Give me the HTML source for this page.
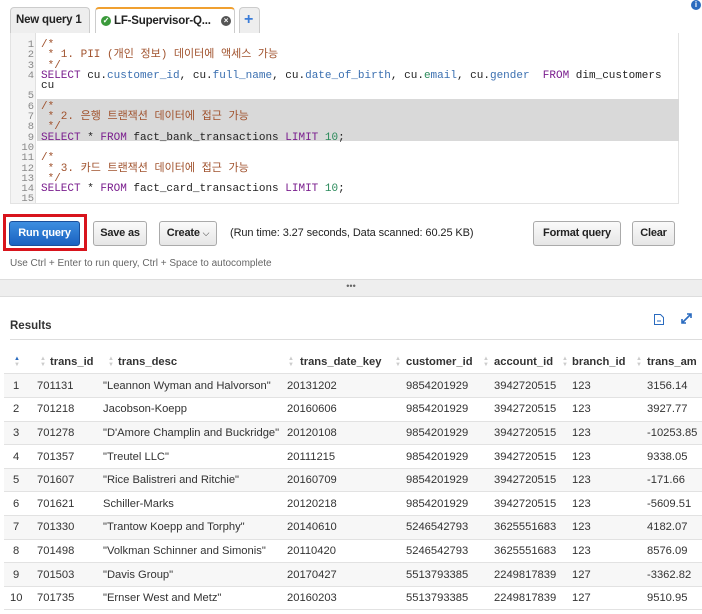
<!DOCTYPE html>
<html><head><meta charset="utf-8"><style>
*{margin:0;padding:0;box-sizing:border-box}
body{width:702px;height:614px;overflow:hidden;background:#fff;font-family:"Liberation Sans",Arial,sans-serif;color:#333;position:relative}
.a{position:absolute}
.tab{position:absolute;top:7px;height:26px;border:1px solid #ccc;border-bottom:none;border-radius:4px 4px 0 0;background:#eee;font-size:11.5px;font-weight:bold;line-height:24px;padding-left:5px;color:#222;letter-spacing:-0.2px}
.ed{position:absolute;left:10px;top:33px;width:669px;height:171px;border:1px solid #e3e3e3;border-top:none;background:#fff}
.gut{position:absolute;left:0;top:0;width:25px;height:100%;background:#f4f4f4;border-right:1px solid #e0e0e0}
.ln{position:absolute;left:0;width:23px;text-align:right;font-family:"Liberation Mono",monospace;font-size:10.5px;color:#888}
.code{position:absolute;left:30px;font-family:"Liberation Mono","Noto Sans CJK KR",monospace;font-size:11px;white-space:pre;color:#222;line-height:10.3px}
.c{color:#a0522d}.k{color:#7a1e8e}.p{color:#3a6fb0}.n{color:#2a8a5a}
.btn{position:absolute;top:221px;height:25px;border:1px solid #aaa;border-radius:3px;background:linear-gradient(#fafafa,#e6e6e6);font-size:11px;font-weight:bold;line-height:23px;text-align:center;color:#222;letter-spacing:-0.2px}
table{position:absolute;left:4px;top:374px;border-collapse:collapse;font-size:11.2px;width:710px;table-layout:fixed}
td{height:23.6px;border-bottom:1px solid #e2e2e2;white-space:nowrap;text-align:left;padding:0;overflow:hidden}
tr.o td{background:#f7f7f7}
.h{position:absolute;top:356px;font-size:11.2px;font-weight:bold;color:#333;white-space:nowrap}
.s{position:absolute;top:356px;color:#ccc;font-size:6px;line-height:6px}
</style></head><body>
<div class="tab" style="left:10px;width:80px">New query 1</div>
<div class="tab" style="left:95px;width:140px;background:#fff;border-top:2px solid #f0a030;height:27px"><span style="display:inline-block;width:10px;height:10px;border-radius:50%;background:#3b9a3b;color:#fff;font-size:8px;line-height:10px;text-align:center;vertical-align:middle">✓</span> LF-Supervisor-Q... <span style="position:absolute;left:125px;top:7px;width:10px;height:10px;border-radius:50%;background:#555;color:#fff;font-size:8px;line-height:10px;text-align:center">×</span></div>
<div class="tab" style="left:239px;width:21px;color:#3b7dd8;font-size:16px;padding-left:4px">+</div>
<div class="a" style="left:691px;top:0;width:10px;height:10px;border-radius:50%;background:#2a6bbf;color:#fff;font-size:8px;font-weight:bold;text-align:center;line-height:10px">i</div>
<div class="ed"><div class="gut"></div>
<div class="a" style="left:26px;top:66px;width:642px;height:42px;background:#d9d9d9"></div>
<div class="ln" style="top:7px;line-height:10.3px">1<br>2<br>3<br>4<br>&nbsp;<br>5<br>6<br>7<br>8<br>9<br>10<br>11<br>12<br>13<br>14<br>15</div>
<div class="code" style="top:7px"><span class="c">/*
 * 1. PII (개인 정보) 데이터에 액세스 가능
 */</span>
<span class="k">SELECT</span> cu.<span class="p">customer_id</span>, cu.<span class="p">full_name</span>, cu.<span class="p">date_of_birth</span>, cu.<span class="n">e</span><span class="p">mail</span>, cu.<span class="p">gender</span>  <span class="k">FROM</span> dim_customers
cu

<span class="c">/*
 * 2. 은행 트랜잭션 데이터에 접근 가능
 */</span>
<span class="k">SELECT</span> * <span class="k">FROM</span> fact_bank_transactions <span class="k">LIMIT</span> <span class="n">10</span>;

<span class="c">/*
 * 3. 카드 트랜잭션 데이터에 접근 가능
 */</span>
<span class="k">SELECT</span> * <span class="k">FROM</span> fact_card_transactions <span class="k">LIMIT</span> <span class="n">10</span>;
</div></div>
<div class="a" style="left:3px;top:214px;width:84px;height:37px;border:3px solid #d8141c"></div>
<div class="btn" style="left:9px;width:71px;background:linear-gradient(#3d8ee0,#1a62c0);border-color:#1a4f9a;color:#fff">Run query</div>
<div class="btn" style="left:93px;width:54px">Save as</div>
<div class="btn" style="left:159px;width:58px">Create <span style="font-weight:normal;font-size:9px">⌵</span></div>
<div class="a" style="left:230px;top:227px;font-size:11px;color:#222;letter-spacing:-0.1px">(Run time: 3.27 seconds, Data scanned: 60.25 KB)</div>
<div class="btn" style="left:533px;width:88px">Format query</div>
<div class="btn" style="left:632px;width:43px">Clear</div>
<div class="a" style="left:10px;top:258px;font-size:10px;color:#666">Use Ctrl + Enter to run query, Ctrl + Space to autocomplete</div>
<div class="a" style="left:0;top:279px;width:702px;height:18px;background:#eee;border-top:1px solid #ddd;border-bottom:1px solid #ddd;text-align:center;font-size:9px;line-height:12px;color:#666">•••</div>
<div class="a" style="left:10px;top:320px;font-size:11.5px;font-weight:bold;color:#333">Results</div>
<div class="a" style="left:10px;top:339px;width:692px;height:1px;background:#ddd"></div>
<svg class="a" style="left:653px;top:313px" width="12" height="13"><path d="M1.5 1.5h6l3 3v7h-9z" fill="none" stroke="#2a6bbf"/><path d="M4 8h4" stroke="#2a6bbf"/></svg>
<svg class="a" style="left:680px;top:312px" width="13" height="13"><path d="M2 11L11 2M7 2h4v4M2 7v4h4" fill="none" stroke="#2a6bbf" stroke-width="1.6"/></svg>
<div class="s" style="left:14px;color:#2a6bbf">▲<br><span style="color:#ccc">▼</span></div>
<div class="s" style="left:40px">▲<br>▼</div><div class="h" style="left:50px">trans_id</div>
<div class="s" style="left:108px">▲<br>▼</div><div class="h" style="left:118px">trans_desc</div>
<div class="s" style="left:288px">▲<br>▼</div><div class="h" style="left:300px">trans_date_key</div>
<div class="s" style="left:395px">▲<br>▼</div><div class="h" style="left:406px">customer_id</div>
<div class="s" style="left:483px">▲<br>▼</div><div class="h" style="left:494px">account_id</div>
<div class="s" style="left:562px">▲<br>▼</div><div class="h" style="left:572px">branch_id</div>
<div class="s" style="left:636px">▲<br>▼</div><div class="h" style="left:647px">trans_am</div>
<div class="a" style="left:4px;top:373px;width:698px;height:1px;background:#e2e2e2"></div>
<table>
<colgroup><col style="width:33px"><col style="width:66px"><col style="width:184px"><col style="width:119px"><col style="width:88px"><col style="width:78px"><col style="width:75px"><col></colgroup>
<tr class="o"><td style="padding-left:9px">1</td><td>701131</td><td>"Leannon Wyman and Halvorson"</td><td>20131202</td><td>9854201929</td><td>3942720515</td><td>123</td><td>3156.14</td></tr>
<tr><td style="padding-left:9px">2</td><td>701218</td><td>Jacobson-Koepp</td><td>20160606</td><td>9854201929</td><td>3942720515</td><td>123</td><td>3927.77</td></tr>
<tr class="o"><td style="padding-left:9px">3</td><td>701278</td><td>"D'Amore Champlin and Buckridge"</td><td>20120108</td><td>9854201929</td><td>3942720515</td><td>123</td><td>-10253.85</td></tr>
<tr><td style="padding-left:9px">4</td><td>701357</td><td>"Treutel LLC"</td><td>20111215</td><td>9854201929</td><td>3942720515</td><td>123</td><td>9338.05</td></tr>
<tr class="o"><td style="padding-left:9px">5</td><td>701607</td><td>"Rice Balistreri and Ritchie"</td><td>20160709</td><td>9854201929</td><td>3942720515</td><td>123</td><td>-171.66</td></tr>
<tr><td style="padding-left:9px">6</td><td>701621</td><td>Schiller-Marks</td><td>20120218</td><td>9854201929</td><td>3942720515</td><td>123</td><td>-5609.51</td></tr>
<tr class="o"><td style="padding-left:9px">7</td><td>701330</td><td>"Trantow Koepp and Torphy"</td><td>20140610</td><td>5246542793</td><td>3625551683</td><td>123</td><td>4182.07</td></tr>
<tr><td style="padding-left:9px">8</td><td>701498</td><td>"Volkman Schinner and Simonis"</td><td>20110420</td><td>5246542793</td><td>3625551683</td><td>123</td><td>8576.09</td></tr>
<tr class="o"><td style="padding-left:9px">9</td><td>701503</td><td>"Davis Group"</td><td>20170427</td><td>5513793385</td><td>2249817839</td><td>127</td><td>-3362.82</td></tr>
<tr><td style="padding-left:6px">10</td><td>701735</td><td>"Ernser West and Metz"</td><td>20160203</td><td>5513793385</td><td>2249817839</td><td>127</td><td>9510.95</td></tr>
</table>
</body></html>
